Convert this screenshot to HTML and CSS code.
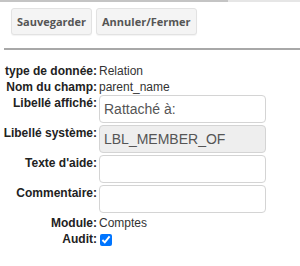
FILE: index.html
```html
<!DOCTYPE html>
<html lang="fr">
<head>
<meta charset="UTF-8" />
<title>Champ</title>
<link rel="stylesheet" href="styles.css">
</head>
<body>

<div class="topline"><span class="topline-dark"></span></div>

<div class="toolbar">
  <button type="button" class="btn">Sauvegarder</button>
  <button type="button" class="btn">Annuler/Fermer</button>
</div>

<hr class="sep">

<!-- fiche du champ -->
<form class="field-form">
  <label class="lbl">type de donnée:</label>
  <div class="val">Relation</div>

  <label class="lbl">Nom du champ:</label>
  <div class="val">parent_name</div>

  <label class="lbl">Libellé affiché:</label>
  <input type="text" class="txt" value="Rattaché à:" />

  <label class="lbl">Libellé système:</label>
  <input type="text" class="txt" value="LBL_MEMBER_OF" readonly />

  <label class="lbl">Texte d'aide:</label>
  <input type="text" class="txt" />

  <label class="lbl">Commentaire:</label>
  <input type="text" class="txt" />

  <label class="lbl">Module:</label>
  <div class="val">Comptes</div>

  <label class="lbl">Audit:</label>
  <div class="val"><input type="checkbox" class="chk" checked /></div>
</form>

</body>
</html>
```

FILE: styles.css
```css
body { font-family: "Liberation Sans", Arial, sans-serif; margin: 0; background: #fff; color: #333; }

.topline { height: 2px; background: #e6e6e6; }
.topline-dark { display: block; width: 228px; height: 2px; background: #c4c4c4; }

.toolbar {
  display: flex;
  gap: 4px;
  padding: 6px 0 0 11px;
}
.btn {
  font-family: "Open Sans", "Liberation Sans", sans-serif;
  font-weight: bold;
  font-size: 11px;
  color: #555;
  background: #f4f4f4;
  border: 1px solid #e2e2e2;
  border-radius: 3px;
  height: 27px;
  padding: 0 5px;
  box-shadow: 0 1px 1px rgba(0,0,0,0.05);
}

.sep {
  margin: 13px 0 0 4px;
  border: none;
  height: 2px;
  background: #a8a8a8;
}

.field-form {
  display: grid;
  grid-template-columns: 97px 167px;
  column-gap: 2px;
  row-gap: 0;
  padding: 13px 0 0 0;
  font-size: 12px;
}
.lbl {
  font-weight: bold;
  color: #222;
  text-align: right;
  white-space: nowrap;
  line-height: 15px;
  padding-top: 1px;
}
.val { line-height: 15px; padding-top: 1px; color: #333; white-space: nowrap; }
.txt {
  box-sizing: border-box;
  height: 28px;
  margin-bottom: 2px;
  border: 1px solid #d4d4d4;
  border-radius: 4px;
  padding: 0 4px;
  font-family: "Liberation Sans", Arial, sans-serif;
  font-size: 14px;
  color: #555;
  background: #fff;
}
.txt[readonly] { background: #eee; }
.chk { margin: 2px 0 0 1px; width: 12px; height: 12px; }
```
